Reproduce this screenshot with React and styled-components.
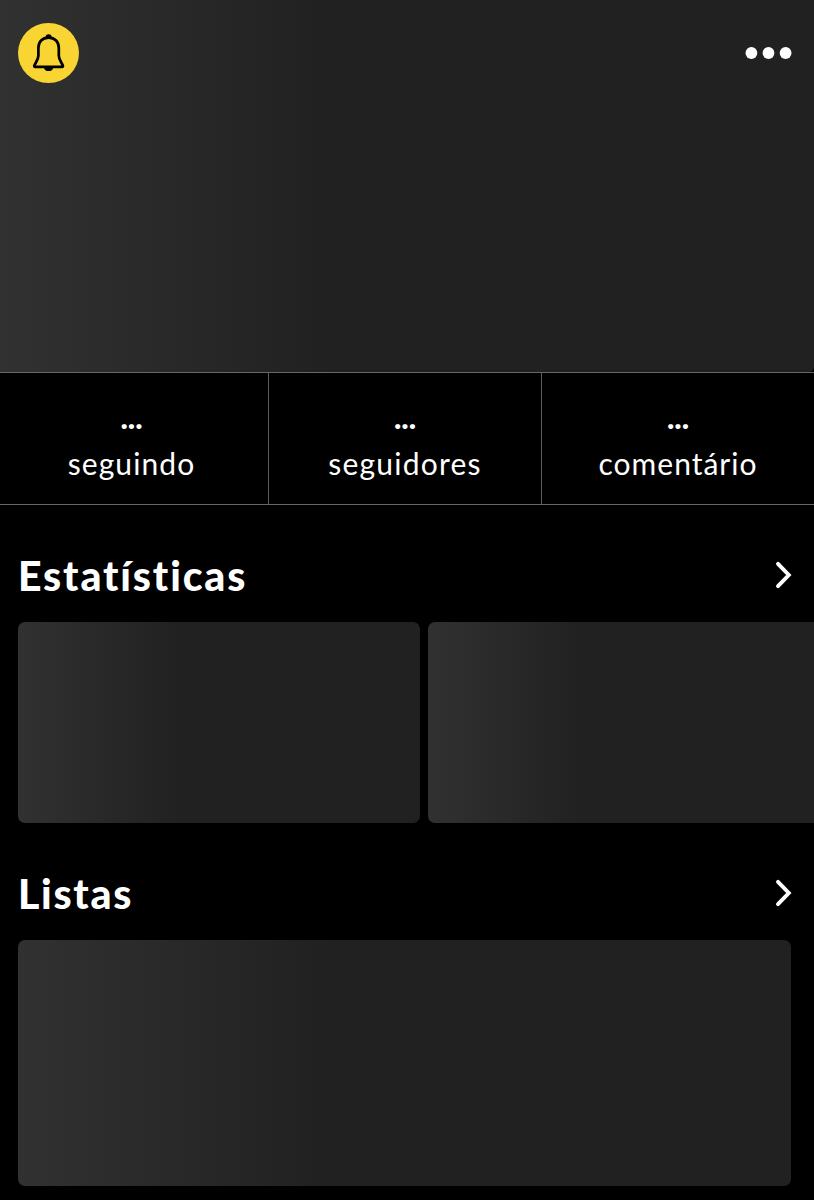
import React from 'react';
import styled, { createGlobalStyle } from 'styled-components';

const GlobalStyle = createGlobalStyle`
  * {
    box-sizing: border-box;
  }
  body {
    margin: 0;
    background-color: #000;
    color: #fff;
    font-family: Lato, 'Liberation Sans', sans-serif;
  }
`;

const Page = styled.main`
  height: 1200px;
  overflow: hidden;
`;

const Cover = styled.header`
  display: flex;
  justify-content: space-between;
  align-items: flex-start;
  height: 372px;
  padding: 22.5px 22px 0 18px;
  border-bottom-right-radius: 5px;
  background: linear-gradient(90deg, #313131 0, #212121 324px);
`;

const IconButton = styled.button`
  display: flex;
  align-items: center;
  justify-content: center;
  width: ${(props) => props.$width}px;
  height: 60.5px;
  padding: 0;
  border: none;
  border-radius: ${(props) => (props.$round ? '50%' : '0')};
  background-color: ${(props) => (props.$round ? '#f8d532' : 'transparent')};
  color: ${(props) => (props.$round ? '#000' : '#fff')};
  cursor: pointer;
`;

const Stats = styled.section`
  display: grid;
  grid-template-columns: 269px 273px 1fr;
  height: 133px;
  border-top: 1px solid #686868;
  border-bottom: 1px solid #686868;
`;

const Stat = styled.div`
  display: flex;
  flex-direction: column;
  align-items: center;
  padding-top: 29px;
  padding-right: ${(props) => props.$shift || 0}px;
  border-right: ${(props) => (props.$last ? 'none' : '1px solid #5c5c5c')};
`;

const StatValue = styled.span`
  height: 42px;
  font-size: 31px;
  font-weight: 900;
  line-height: 30px;
`;

const StatLabel = styled.span`
  font-size: 30px;
  line-height: 38px;
  letter-spacing: ${(props) => props.$spacing}px;
`;

const SectionHeader = styled.div`
  display: flex;
  justify-content: space-between;
  align-items: center;
  height: 117px;
  padding: 22px 22px 0 18px;
`;

const Title = styled.h2`
  margin: 2px 0 0;
  font-size: 41px;
  font-weight: 900;
  line-height: 50px;
  letter-spacing: ${(props) => props.$spacing}px;
`;

const CardRow = styled.div`
  display: flex;
  gap: 7.5px;
  padding-left: 18px;
  overflow: hidden;
`;

const Card = styled.div`
  flex: none;
  width: ${(props) => props.$width}px;
  height: ${(props) => props.$height}px;
  border-radius: 7px;
  background: linear-gradient(90deg, #313131 0, #212121 ${(props) => props.$fade}px);
`;

const BellIcon = () => (
  <svg width="34" height="40" viewBox="0 0 34 40" fill="none">
    <path
      d="M16.6 4.6C10.2 4.6 6.4 9 6.4 14.8V22.6C6.4 27.3 3.2 29.5 2.3 32.9Q2.1 33.8 3.1 33.8H30.1Q31.1 33.8 30.9 32.9C30 29.5 26.8 27.3 26.8 22.6V14.8C26.8 9 23 4.6 16.6 4.6Z"
      stroke="currentColor"
      strokeWidth="2.7"
      strokeLinejoin="round"
    />
    <path d="M13.6 4.2a3 3 0 0 1 6 0zM11.8 34.2h9.6a4.9 4.9 0 0 1-9.6 0z" fill="currentColor" />
  </svg>
);

const MoreIcon = () => (
  <svg width="48" height="12" viewBox="0 0 48 12" fill="currentColor">
    <circle cx="7.4" cy="6" r="5.9" />
    <circle cx="24.5" cy="6" r="5.9" />
    <circle cx="41.6" cy="6" r="5.9" />
  </svg>
);

const ChevronIcon = () => (
  <svg width="18" height="28" viewBox="0 0 18 28" fill="none">
    <path d="M4 2.8L14.8 14L4 25.2" stroke="currentColor" strokeWidth="3.9" strokeLinecap="round" />
  </svg>
);

const App = () => {
  return (
    <>
      <GlobalStyle />
      <Page>
        <Cover>
          <IconButton $round $width={61} aria-label="Notificações">
            <BellIcon />
          </IconButton>
          <IconButton $width={48} aria-label="Mais">
            <MoreIcon />
          </IconButton>
        </Cover>
        <Stats>
          <Stat $shift={5}>
            <StatValue>...</StatValue>
            <StatLabel $spacing={1.1}>seguindo</StatLabel>
          </Stat>
          <Stat>
            <StatValue>...</StatValue>
            <StatLabel $spacing={1.2}>seguidores</StatLabel>
          </Stat>
          <Stat $last>
            <StatValue>...</StatValue>
            <StatLabel $spacing={1}>comentário</StatLabel>
          </Stat>
        </Stats>
        <SectionHeader>
          <Title $spacing={1.85}>Estatísticas</Title>
          <ChevronIcon />
        </SectionHeader>
        <CardRow>
          <Card $width={402} $height={201} $fade={162} />
          <Card $width={402} $height={201} $fade={152} />
        </CardRow>
        <SectionHeader>
          <Title $spacing={1.7}>Listas</Title>
          <ChevronIcon />
        </SectionHeader>
        <CardRow>
          <Card $width={773} $height={246} $fade={306} />
        </CardRow>
      </Page>
    </>
  );
};

export default App;
